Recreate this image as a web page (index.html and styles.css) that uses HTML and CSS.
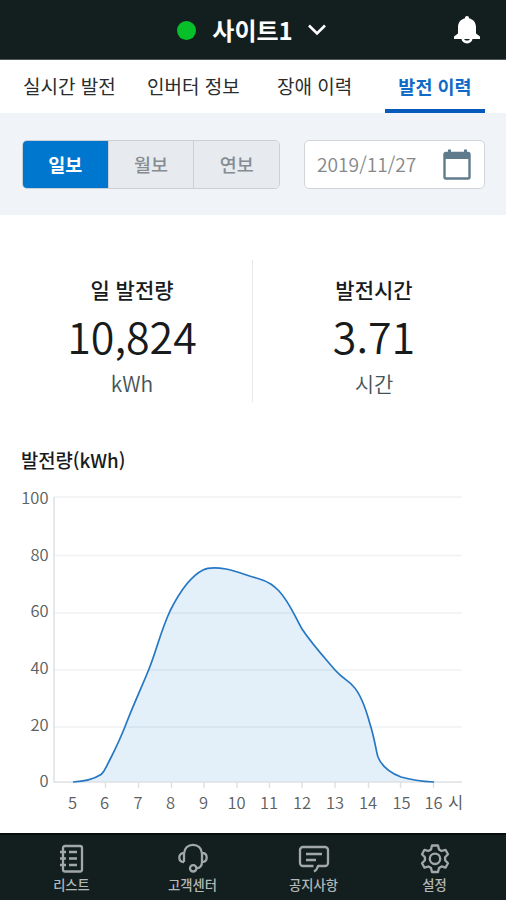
FILE: index.html
```html
<!DOCTYPE html>
<html lang="ko">
<head>
<meta charset="utf-8">
<meta name="viewport" content="width=device-width, initial-scale=1">
<title>발전 이력</title>
<link rel="stylesheet" href="styles.css">
</head>
<body>
<div class="app">
  <header class="topbar">
    <span></span>
    <div class="site">
      <span class="status"></span>
      <h1 class="site-name">사이트1</h1>
      <svg class="chevron" width="20" height="14" viewBox="0 0 20 14"><path d="M2 2.500l8 8 8-8"/></svg>
    </div>
    <svg class="bell" width="28" height="30" viewBox="0 0 28 30"><path d="M14 1c-1.300 0-2 .8-2 2v.3C7.800 4.200 5 7.800 5 12v6.500L1 21.500V24h26v-2.500l-4-3V12c0-4.200-2.800-7.800-7-8.700V3c0-1.200-.7-2-2-2z"/><path d="M8.500 23.500a5.500 5 0 0 0 11 0h-2.700a2.800 2 0 0 1-5.600 0z"/></svg>
  </header>
  <nav class="tabs">
    <a class="tab">실시간 발전</a>
    <a class="tab">인버터 정보</a>
    <a class="tab">장애 이력</a>
    <a class="tab active">발전 이력</a>
  </nav>
  <section class="filters">
    <div class="segments">
      <button class="segment selected">일보</button>
      <button class="segment">월보</button>
      <button class="segment">연보</button>
    </div>
    <div class="date">
      <span>2019/11/27</span>
      <svg class="calendar" width="28" height="31" viewBox="0 0 28 31"><rect x="1.500" y="4" width="25" height="25.500" rx="1.500"/><path class="fill" d="M1 4h26v6H1zM5 .5h3V5H5zM21 .5h3V5h-3z"/></svg>
    </div>
  </section>
  <section class="stats">
    <div class="stat">
      <span class="label">일 발전량</span>
      <strong class="value">10,824</strong>
      <span class="unit">kWh</span>
    </div>
    <div class="stat">
      <span class="label">발전시간</span>
      <strong class="value">3.71</strong>
      <span class="unit">시간</span>
    </div>
  </section>
  <section class="chart">
    <h2 class="chart-title">발전량(kWh)</h2>
    <svg class="plot" width="506" height="345" viewBox="0 480 506 345">
      <path class="grid" d="M54 497H462M54 555.500H462M54 613H462M54 670H462M54 727H462"/>
      <path class="area" d="M73 782C83 781.500 94 779 101 774.500C105 771 106 767 109 761.500C117 746 122 735 128 719C136 699 143 684 149 669C157 649 160 633 170 611C179 593 189 577 203 570C209 567 220 568 226 569C237 571 248 576 258 578.500C270 582 274 586 279 591C290 603 294 615 302 629C312 644 323 656 335 670C343 679 349 681 353 686C361 694 367 713 370 724C375 740 376 751 378 757C383 769 393 774 401 777C411 780 423 781.500 434 782Z"/>
      <path class="axis" d="M54 497V782H462M105.500 782v6M138.500 782v6M171.500 782v6M204 782v6M237 782v6M269.500 782v6M302 782v6M335 782v6M368.500 782v6M400.500 782v6M433.500 782v6"/>
      <path class="curve" d="M73 782C83 781.500 94 779 101 774.500C105 771 106 767 109 761.500C117 746 122 735 128 719C136 699 143 684 149 669C157 649 160 633 170 611C179 593 189 577 203 570C209 567 220 568 226 569C237 571 248 576 258 578.500C270 582 274 586 279 591C290 603 294 615 302 629C312 644 323 656 335 670C343 679 349 681 353 686C361 694 367 713 370 724C375 740 376 751 378 757C383 769 393 774 401 777C411 780 423 781.500 434 782"/>
      <g class="y-labels">
        <text x="48.500" y="504">100</text><text x="48.500" y="560.500">80</text><text x="48.500" y="617">60</text><text x="48.500" y="674">40</text><text x="48.500" y="730.500">20</text><text x="48.500" y="787">0</text>
      </g>
      <g class="x-labels">
        <text x="72.500" y="808.500">5</text><text x="104.500" y="808.500">6</text><text x="138" y="808.500">7</text><text x="170.500" y="808.500">8</text><text x="203.500" y="808.500">9</text><text x="236.500" y="808.500">10</text><text x="269" y="808.500">11</text><text x="302" y="808.500">12</text><text x="335" y="808.500">13</text><text x="368" y="808.500">14</text><text x="401.500" y="808.500">15</text><text x="433.500" y="808.500">16</text><text class="hour" x="455.500" y="808.500">시</text>
      </g>
    </svg>
  </section>
  <nav class="bottombar">
    <a class="item">
      <svg width="32" height="32" viewBox="0 0 32 32"><rect x="7" y="3" width="19" height="25.500" rx="2"/><path d="M4 9h6M4 15.500h6M4 22h6M13 9h8M13 15.500h8M13 22h8"/></svg>
      <span>리스트</span>
    </a>
    <a class="item">
      <svg width="32" height="32" viewBox="0 0 32 32"><path d="M7 19V10.500C7.500 5 11 1.800 16 1.800s8.500 3.200 9 8.700V19c0 3.500-2 6-5.500 6.300M7 10c-3 0-4.700 2-4.700 4.500S4 19 7 19M25 10c3 0 4.700 2 4.700 4.500S28 19 25 19"/><circle cx="16.200" cy="25.300" r="3.200"/></svg>
      <span>고객센터</span>
    </a>
    <a class="item">
      <svg width="32" height="32" viewBox="0 0 32 32"><path d="M16 28.500q3-1.500 4-5.500h7a3 3 0 0 0 3-3V7a3 3 0 0 0-3-3H5a3 3 0 0 0-3 3v13a3 3 0 0 0 3 3h10.500M8 11h16M8 17h10"/></svg>
      <span>공지사항</span>
    </a>
    <a class="item">
      <svg width="32" height="32" viewBox="0 0 32 32"><path d="M13 2.500h6l1 4 2.600 1.500 3.900-1.200 2.500 4.400-2.900 3v3l2.900 3-2.500 4.400-3.900-1.200L20 25l-1 4h-6l-1-4-2.600-1.500-3.900 1.200L3 20.200l2.900-3v-3l-2.900-3L5.500 6.800 9.400 8 12 6.500z"/><circle cx="16" cy="15.800" r="5.200"/></svg>
      <span>설정</span>
    </a>
  </nav>
</div>
</body>
</html>
```
FILE: styles.css
```css
* { box-sizing: border-box; }

body {
  margin: 0;
  background: #fff;
  color: #171b1c;
  font-family: "Noto Sans CJK KR", "Noto Sans", sans-serif;
}

.app {
  display: flex;
  flex-direction: column;
  width: 506px;
  height: 900px;
  overflow: hidden;
}

.topbar {
  display: grid;
  grid-template-columns: 1fr auto 1fr;
  align-items: center;
  height: 60px;
  padding: 0 25px 0 23px;
  background: #131f1f;
  border-bottom: 1px solid #50595a;
}

.site { display: flex; align-items: center; }
.status { width: 19px; height: 19px; margin-top: 2px; border-radius: 50%; background: #07c029; }
.site-name { margin: 0 14px 0 16px; font-size: 24px; line-height: 36px; font-weight: 700; color: #fff; }
.chevron { margin-top: 1px; fill: none; stroke: #fff; stroke-width: 2.6; }
.bell { justify-self: end; fill: #fff; }

.tabs {
  display: grid;
  grid-template-columns: 124px 130px 108px 100px;
  grid-template-rows: 53px;
  height: 53px;
  padding: 0 21px 0 23px;
}

.tab {
  font-size: 19px;
  line-height: 52px;
  color: #292d2e;
}

.tab.active {
  height: 53px;
  text-align: center;
  font-size: 18.500px;
  font-weight: 700;
  color: #0f6bc5;
  border-bottom: 4px solid #065bba;
}

.filters {
  display: flex;
  justify-content: space-between;
  height: 102px;
  padding: 27px 21px 26px 22px;
  background: #f0f4f8;
}

.segments {
  display: flex;
  width: 258px;
  overflow: hidden;
  border: 1px solid #cbd0d5;
  border-radius: 5px;
}

.segment {
  flex: 1;
  padding: 0 0 2px;
  border: 0;
  border-left: 1px solid #cbd0d5;
  background: #e7ebef;
  font: 500 18.500px/44px "Noto Sans CJK KR", sans-serif;
  color: #858c92;
}

.segment.selected { border-left: 0; background: #0077ce; color: #fff; font-weight: 700; }

.date {
  display: flex;
  align-items: center;
  justify-content: space-between;
  width: 181px;
  padding: 0 13px 0 12px;
  border: 1px solid #d0d5d8;
  border-radius: 5px;
  background: #fff;
  font-size: 19.200px;
  line-height: 44px;
  font-weight: 350;
  color: #858889;
}

.date span { padding-bottom: 2px; }

.calendar { fill: none; stroke: #607b8c; stroke-width: 2.4; }
.calendar .fill { fill: #607b8c; stroke: none; }

.stats {
  display: grid;
  grid-template-columns: 231px 1fr;
  height: 142px;
  margin: 45px 22px 0;
}

.stat { display: flex; flex-direction: column; align-items: center; padding: 14px 0 0; }
.stat:first-child { padding-right: 10px; border-right: 1px solid #e6e8e9; }
.stat:last-child { padding-left: 11px; }
.label { font-size: 21px; line-height: 30px; font-weight: 500; }
.value { font-size: 43px; line-height: 63px; font-weight: 350; }
.unit { font-size: 21px; line-height: 33px; font-weight: 350; color: #445456; }

.chart { flex: 1; }
.chart-title { margin: 43px 0 5px 21px; font-size: 18.800px; line-height: 30px; font-weight: 500; }
.plot { display: block; font-size: 16.500px; font-weight: 350; fill: #5b6061; }
.grid { fill: none; stroke: #eff1f2; stroke-width: 1.5; }
.axis { fill: none; stroke: #dee1e2; stroke-width: 1.5; }
.area { fill: #0078cf; fill-opacity: .11; }
.curve { fill: none; stroke: #2577c4; stroke-width: 1.7; }
.y-labels { text-anchor: end; }
.x-labels { text-anchor: middle; }
.hour { font-weight: 400; }

.bottombar {
  display: grid;
  grid-template-columns: repeat(4, 121px);
  justify-content: center;
  flex: none;
  height: 67px;
  background: #131f1f;
  border-top: 2px solid #070c0c;
}

.item {
  display: flex;
  flex-direction: column;
  align-items: center;
  padding-top: 8px;
  font-size: 13.300px;
  line-height: 20px;
  font-weight: 500;
  color: #b3b8b8;
}

.item svg { fill: none; stroke: #a2a8a8; stroke-width: 2.3; stroke-linejoin: round; }
```
